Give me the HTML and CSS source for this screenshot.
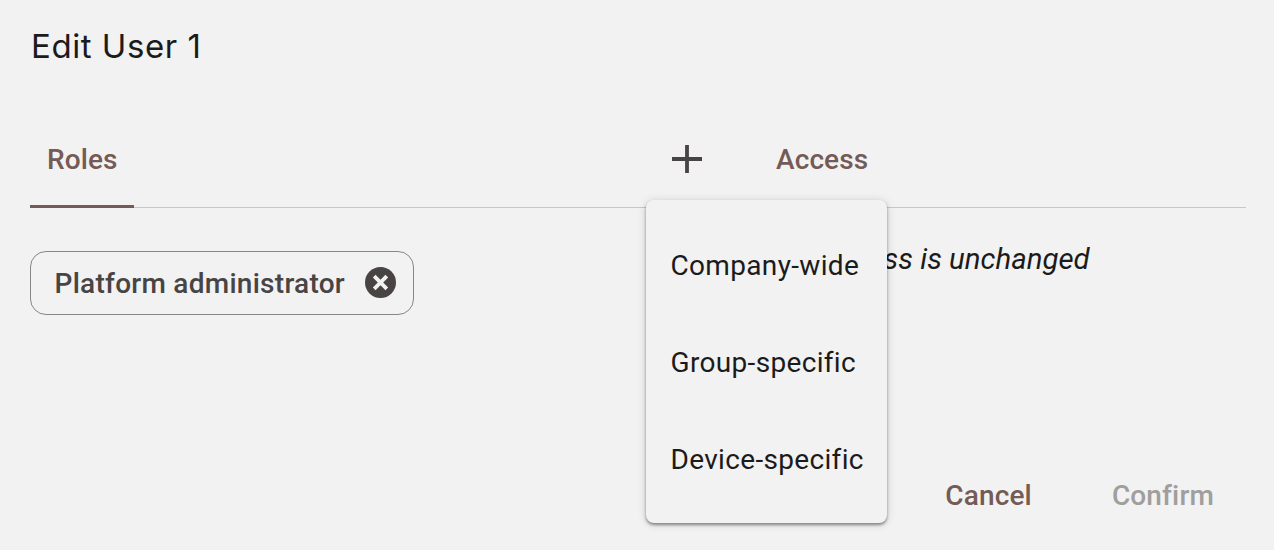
FILE: index.html
```html
<!DOCTYPE html>
<html lang="en">
<head>
<meta charset="utf-8">
<title>Edit User 1</title>
<link rel="stylesheet" href="styles.css">
</head>
<body>
<main class="dialog">
  <h1 class="title">Edit User 1</h1>
  <div class="tabs">
    <div class="tabs-left">
      <div class="tab tab-active">Roles</div>
      <button class="add" aria-label="Add">
        <svg viewBox="0 0 30 30" width="30" height="30"><path d="M13.1 1h3.8v12.1H30v3.8H16.9V29h-3.8V16.9H0v-3.8h13.1z"/></svg>
      </button>
    </div>
    <div class="tab tab-access">Access</div>
  </div>
  <div class="content">
    <div class="col-roles">
      <div class="chip">
        <span class="chip-label">Platform administrator</span>
        <svg class="chip-x" viewBox="0 0 31 31" width="31" height="31"><circle cx="15.5" cy="15.5" r="15.5"/><path d="M9.2 9.2l12.6 12.6M21.8 9.2L9.2 21.8"/></svg>
      </div>
    </div>
    <div class="col-access"><em class="note">Access is unchanged</em></div>
  </div>
  <div class="actions">
    <button class="btn btn-cancel">Cancel</button>
    <button class="btn btn-confirm">Confirm</button>
  </div>
  <ul class="menu">
    <li>Company-wide</li>
    <li>Group-specific</li>
    <li>Device-specific</li>
  </ul>
</main>
</body>
</html>
```
FILE: styles.css
```css
* { box-sizing: border-box; }
html, body { margin: 0; height: 100%; }
body {
  background: #f2f2f2;
  font-family: Roboto, "Liberation Sans", sans-serif;
  overflow: hidden;
}
.dialog {
  position: relative;
  width: 1274px;
  height: 550px;
  padding: 0 28px 0 30px;
}
.title {
  margin: 0;
  padding: 26px 0 0 1px;
  height: 112px;
  font-family: Inter, Lato, sans-serif;
  font-size: 33px;
  line-height: 40px;
  font-weight: 400;
  color: #1c1b1b;
  letter-spacing: 0.55px;
}
.tabs {
  display: flex;
  height: 96px;
  border-bottom: 1px solid #c9c6c6;
}
.tabs-left {
  width: 729px;
  display: flex;
  justify-content: space-between;
  align-items: flex-start;
  padding-right: 57px;
}
.tab {
  font-size: 28px;
  font-weight: 500;
  line-height: 36px;
  color: #755a55;
  height: 96px;
  padding-top: 30px;
  letter-spacing: 0.1px;
}
.tab-active {
  width: 104px;
  padding-left: 17px;
  border-bottom: 3.5px solid #755a55;
}
.tab-access { padding-left: 17px; }
.add {
  margin: 32px 0 0;
  padding: 0;
  border: 0;
  background: none;
  height: 30px;
  display: block;
}
.add svg { display: block; fill: #484443; }
.content {
  display: flex;
  height: 276px;
}
.col-roles { width: 746px; padding-top: 43px; }
.chip {
  width: 384px;
  height: 64px;
  border: 1px solid #8a8685;
  border-radius: 16px;
  padding: 0 17px 0 23.5px;
  display: flex;
  align-items: center;
  justify-content: space-between;
}
.chip-label {
  font-size: 28px;
  font-weight: 500;
  color: #484443;
  letter-spacing: 0.27px;
}
.chip-x { margin-bottom: 2px; }
.chip-x circle { fill: #484443; }
.chip-x path { stroke: #f2f2f2; stroke-width: 3.8; fill: none; }
.col-access { padding: 33px 0 0 44px; }
.note {
  font-size: 29.4px;
  line-height: 36px;
  color: #1c1b1b;
}
.actions {
  display: flex;
  justify-content: flex-end;
  margin-top: -6px;
}
.btn {
  border: 0;
  background: none;
  padding: 0;
  font: 500 28px/36px Roboto, sans-serif;
  letter-spacing: 0.15px;
}
.btn-cancel { color: #755a55; margin-right: 80px; }
.btn-confirm { color: #a09e9e; margin-right: 32px; }
.menu {
  position: absolute;
  left: 646px;
  top: 200px;
  width: 241px;
  height: 323px;
  margin: 0;
  padding: 17px 0 15px;
  list-style: none;
  background: #f2f2f2;
  border-radius: 8px;
  box-shadow: 0 2px 3px rgba(0,0,0,.4), 0 1px 8px 1px rgba(0,0,0,.12);
}
.menu li {
  height: 97px;
  padding-left: 24.5px;
  display: flex;
  align-items: center;
  font-size: 28px;
  letter-spacing: 0.33px;
  color: #1c1b1b;
}
```
